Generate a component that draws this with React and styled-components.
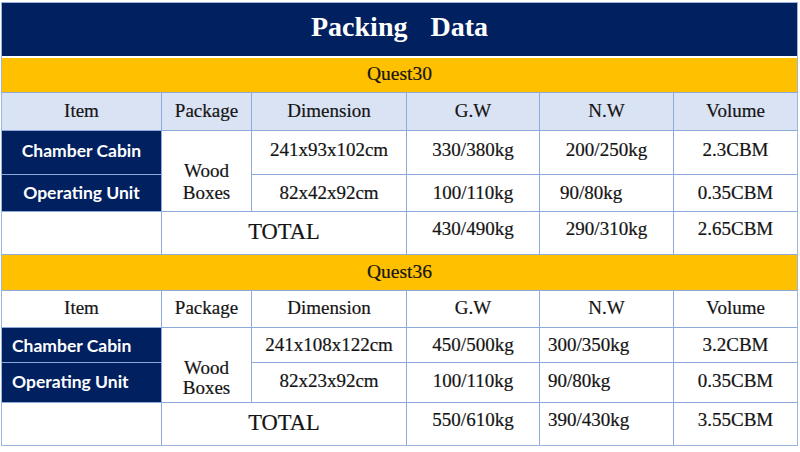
import React from 'react';
import styled, { createGlobalStyle } from 'styled-components';

const GlobalStyle = createGlobalStyle`
  html, body {
    margin: 0;
    padding: 0;
    background: #ffffff;
  }
  body {
    font-family: "Liberation Serif", "DejaVu Serif", serif;
    color: #141414;
  }
`;

const Page = styled.div`
  width: 800px;
  height: 452px;
  padding: 2px 0 0 1px;
  box-sizing: border-box;
`;

const Sheet = styled.div`
  width: 797px;
  box-sizing: border-box;
  border: 1px solid #9db5dc;
  background: #8eaadb;
  display: flex;
  flex-direction: column;
  gap: 1px;
`;

const Title = styled.div`
  height: 55px;
  background: #002060;
  color: #ffffff;
  font-size: 28px;
  font-weight: 700;
  word-spacing: 16px;
  display: flex;
  align-items: center;
  justify-content: center;
  padding-bottom: 5px;
  box-sizing: border-box;
  border-bottom: 2px solid #ffffff;
  margin-bottom: -1px;
`;

const Grid = styled.div`
  display: grid;
  grid-template-columns: 159px 89px 154px 132px 133px 123px;
  grid-template-rows: ${(p) => p.$rows.map((r) => `${r}px`).join(' ')};
  gap: 1px;
`;

const Cell = styled.div`
  background: #ffffff;
  display: flex;
  align-items: center;
  justify-content: ${(p) => (p.$pl != null ? 'flex-start' : 'center')};
  padding: 0 0 ${(p) => p.$lift || 0}px ${(p) => p.$pl || 0}px;
  box-sizing: border-box;
  font-size: 19px;
  white-space: nowrap;
  -webkit-text-stroke: 0.2px currentColor;
`;

const QuestBar = styled(Cell)`
  grid-column: 1 / -1;
  background: #ffc000;
  font-size: 19.5px;
`;

const HeadCell = styled(Cell)`
  background: ${(p) => (p.$tinted ? '#dae3f3' : '#ffffff')};
`;

const ItemCell = styled(Cell)`
  background: #002060;
  color: #ffffff;
  font-family: Lato, "Open Sans", "Liberation Sans", sans-serif;
  font-weight: 700;
  font-size: 17.5px;
  -webkit-text-stroke: 0;
`;

const PackageCell = styled(Cell)`
  grid-row: span 2;
  flex-direction: column;
  padding: ${(p) => p.$pt}px 0 0 0;
  line-height: ${(p) => p.$lh}px;
`;

const TotalCell = styled(Cell)`
  grid-column: span 2;
  font-size: 22.5px;
`;

const sections = [
  {
    name: 'Quest30',
    tinted: true,
    rows: [34, 37, 43, 36, 42],
    itemPad: null,
    pkg: { pt: 22, lh: 22 },
    lines: [
      { item: 'Chamber Cabin', lift: 5, cells: ['241x93x102cm', '330/380kg', '200/250kg', '2.3CBM'] },
      { item: 'Operating Unit', lift: 1, cells: ['82x42x92cm', '100/110kg', { v: '90/80kg', pl: 20 }, '0.35CBM'] },
    ],
    total: { lift: 8, cells: ['430/490kg', '290/310kg', '2.65CBM'] },
  },
  {
    name: 'Quest36',
    tinted: false,
    rows: [35, 36, 34, 39, 42],
    itemPad: 10,
    pkg: { pt: 26, lh: 20 },
    lines: [
      { item: 'Chamber Cabin', lift: 0, cells: ['241x108x122cm', '450/500kg', { v: '300/350kg', pl: 8 }, '3.2CBM'] },
      { item: 'Operating Unit', lift: 3, cells: ['82x23x92cm', '100/110kg', { v: '90/80kg', pl: 8 }, '0.35CBM'] },
    ],
    total: { lift: 8, cells: ['550/610kg', { v: '390/430kg', pl: 8 }, '3.55CBM'] },
  },
];

const headers = ['Item', 'Package', 'Dimension', 'G.W', 'N.W', 'Volume'];

function Value({ c, lift }) {
  const cell = typeof c === 'string' ? { v: c } : c;
  return (
    <Cell $lift={lift} $pl={cell.pl}>
      {cell.v}
    </Cell>
  );
}

function Section({ s }) {
  const [first, second] = s.lines;
  return (
    <Grid $rows={s.rows}>
      <QuestBar $lift={2}>{s.name}</QuestBar>
      {headers.map((h) => (
        <HeadCell key={h} $tinted={s.tinted} $lift={2}>
          {h}
        </HeadCell>
      ))}

      <ItemCell $pl={s.itemPad} $lift={first.lift}>{first.item}</ItemCell>
      <PackageCell $pt={s.pkg.pt} $lh={s.pkg.lh}>
        <span>Wood</span>
        <span>Boxes</span>
      </PackageCell>
      {first.cells.map((c, j) => (
        <Value key={j} c={c} lift={first.lift} />
      ))}

      <ItemCell $pl={s.itemPad} $lift={second.lift}>{second.item}</ItemCell>
      {second.cells.map((c, j) => (
        <Value key={j} c={c} lift={second.lift} />
      ))}

      <Cell />
      <TotalCell $lift={3}>TOTAL</TotalCell>
      {s.total.cells.map((c, j) => (
        <Value key={j} c={c} lift={s.total.lift} />
      ))}
    </Grid>
  );
}

export default function App() {
  return (
    <Page>
      <GlobalStyle />
      <Sheet>
        <Title>Packing Data</Title>
        {sections.map((s) => (
          <Section key={s.name} s={s} />
        ))}
      </Sheet>
    </Page>
  );
}
